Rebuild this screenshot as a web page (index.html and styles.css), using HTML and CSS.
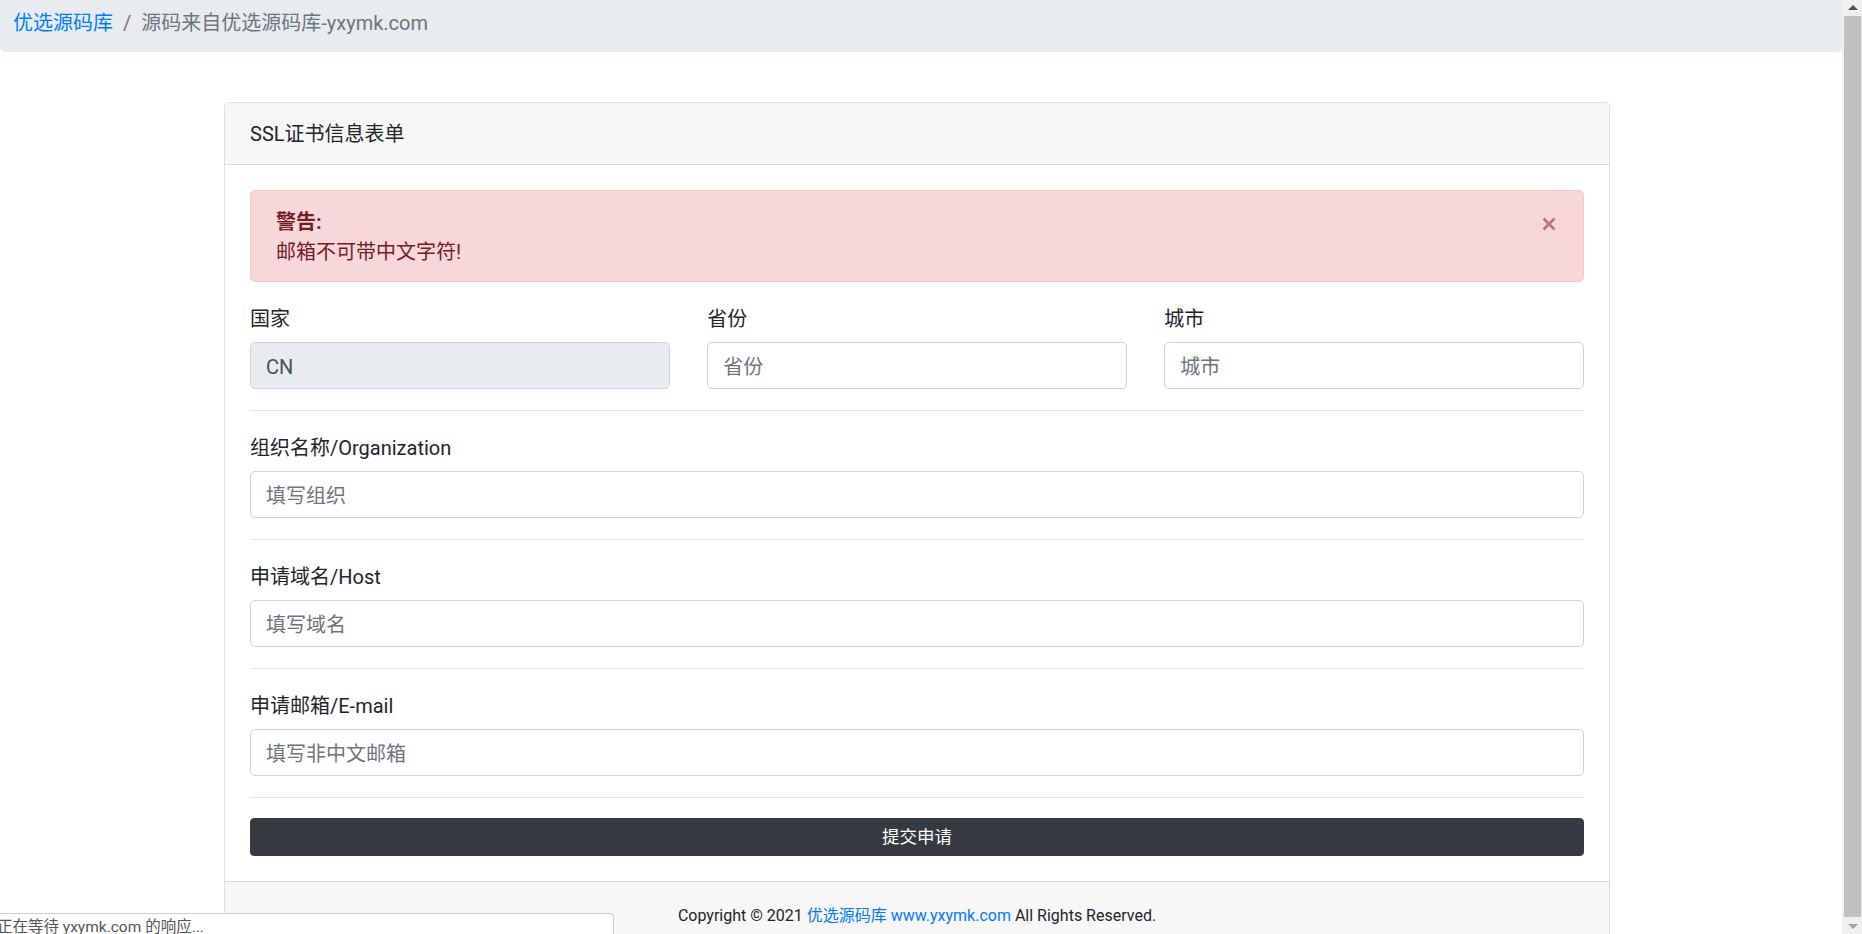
FILE: index.html
```html
<!DOCTYPE html>
<html lang="zh-CN">

<head>
    <meta charset="UTF-8" />
    <meta name="viewport" content="width=device-width, initial-scale=1.0" />
    <title>SSL证书信息表单</title>
    <link rel="stylesheet" href="styles.css">
</head>

<body>
    <div class="page">
        <nav>
            <ol class="breadcrumb">
                <li class="breadcrumb-item"><a href="#">优选源码库</a></li>
                <li class="breadcrumb-item active">源码来自优选源码库-yxymk.com</li>
            </ol>
        </nav>

        <div class="container">
            <div class="card">
                <div class="card-header">SSL证书信息表单</div>

                <div class="card-body">
                    <div class="alert">
                        <div>
                            <strong>警告:</strong><br>
                            邮箱不可带中文字符!
                        </div>
                        <button type="button" class="close" aria-label="Close">
                            <svg width="14" height="14" viewBox="0 0 14 14">
                                <path d="M1.5 1.5 L12.5 12.5 M12.5 1.5 L1.5 12.5" />
                            </svg>
                        </button>
                    </div>

                    <form>
                        <div class="form-row">
                            <div class="form-group">
                                <label>国家</label>
                                <input type="text" class="form-control" value="CN" readonly>
                            </div>
                            <div class="form-group">
                                <label>省份</label>
                                <input type="text" class="form-control" placeholder="省份">
                            </div>
                            <div class="form-group">
                                <label>城市</label>
                                <input type="text" class="form-control" placeholder="城市">
                            </div>
                        </div>
                        <hr>
                        <div class="form-group">
                            <label>组织名称/Organization</label>
                            <input type="text" class="form-control" placeholder="填写组织">
                        </div>
                        <hr>
                        <div class="form-group">
                            <label>申请域名/Host</label>
                            <input type="text" class="form-control" placeholder="填写域名">
                        </div>
                        <hr>
                        <div class="form-group">
                            <label>申请邮箱/E-mail</label>
                            <input type="text" class="form-control" placeholder="填写非中文邮箱">
                        </div>
                        <hr>
                        <button type="submit" class="btn">提交申请</button>
                    </form>
                </div>

                <div class="card-footer">
                    <small>Copyright © 2021 <a href="#">优选源码库 www.yxymk.com</a> All Rights Reserved.</small>
                </div>
            </div>
        </div>
    </div>

    <div class="scrollbar">
        <div class="scroll-btn"><span class="arrow-up"></span></div>
        <div class="thumb"></div>
        <div class="scroll-btn"><span class="arrow-down"></span></div>
    </div>

    <div class="status">正在等待 yxymk.com 的响应...</div>
</body>

</html>
```

FILE: styles.css
```css
* {
    box-sizing: border-box;
}

body {
    margin: 0;
    height: 100vh;
    display: flex;
    overflow: hidden;
    font-family: Roboto, "Noto Sans CJK SC", sans-serif;
    font-size: 20px;
    line-height: 1.5;
    color: #212529;
    background: #fff;
}

a {
    color: #007bff;
    text-decoration: none;
}

.page {
    flex: 1;
    min-width: 0;
    overflow: hidden;
}

/* breadcrumb (page is scrolled down a few px, so top padding is short) */
.breadcrumb {
    display: flex;
    list-style: none;
    margin: 0;
    padding: 8px 13px 14px;
    background: #e9ecef;
    border-radius: 0 0 5px 5px;
}

.breadcrumb-item+.breadcrumb-item {
    padding-left: 10px;
}

.breadcrumb-item+.breadcrumb-item::before {
    content: "/";
    padding-right: 10px;
    color: #6c757d;
}

.breadcrumb-item.active {
    color: #6c757d;
}

.container {
    width: 1386px;
    margin: 50px 0 0 224px;
}

.card {
    border: 1px solid rgba(0, 0, 0, 0.125);
    border-radius: 5px;
    background: #fff;
}

.card-header {
    padding: 16px 25px 15px;
    background: #f7f7f7;
    border-bottom: 1px solid rgba(0, 0, 0, 0.125);
    border-radius: 4px 4px 0 0;
}

.card-body {
    padding: 25px;
}

.card-footer {
    padding: 17px 25px 15px;
    background: #f7f7f7;
    border-top: 1px solid rgba(0, 0, 0, 0.125);
    text-align: center;
}

.card-footer small {
    font-size: 16px;
}

/* alert */
.alert {
    display: flex;
    justify-content: space-between;
    align-items: flex-start;
    padding: 16px 25px 14px;
    margin-bottom: 20px;
    color: #721c24;
    background: #f8d7da;
    border: 1px solid #f5c6cb;
    border-radius: 5px;
}

.alert strong {
    font-weight: 700;
}

.close {
    margin: 10px 2px 0 0;
    padding: 0;
    border: none;
    background: none;
    line-height: 0;
    cursor: pointer;
}

.close svg path {
    stroke: #b5797f;
    stroke-width: 2.8;
    fill: none;
}

/* form */
.form-row {
    display: grid;
    grid-template-columns: repeat(3, 1fr);
    column-gap: 37.5px;
    margin-bottom: 21px;
}

.form-group {
    margin-bottom: 21px;
}

.form-row .form-group {
    margin-bottom: 0;
}

label {
    display: block;
    padding-top: 2px;
    margin-bottom: 8px;
}

.form-control {
    display: block;
    width: 100%;
    height: 47px;
    padding: 9px 15px 6px;
    font-family: inherit;
    font-size: 20px;
    line-height: 1.5;
    color: #495057;
    background: #fff;
    border: 1px solid #ced4da;
    border-radius: 5px;
}

.form-control::placeholder {
    color: #6c757d;
}

.form-control[readonly] {
    background: #e9ecef;
}

hr {
    margin: 21px 0 20px;
    border: 0;
    border-top: 1px solid rgba(0, 0, 0, 0.1);
}

.btn {
    display: block;
    width: 100%;
    padding: 5px 10px;
    font-family: inherit;
    font-size: 17.5px;
    line-height: 1.5;
    color: #fff;
    background: #343a40;
    border: 1px solid #343a40;
    border-radius: 4px;
    cursor: pointer;
}

/* window chrome: scrollbar and status bubble */
.scrollbar {
    width: 20px;
    flex: none;
    display: flex;
    flex-direction: column;
    background: #f0f0f0;
}

.scroll-btn {
    height: 15px;
    display: flex;
    align-items: center;
    justify-content: center;
    padding-left: 1px;
}

.arrow-up {
    border-left: 5px solid transparent;
    border-right: 5px solid transparent;
    border-bottom: 5px solid #505050;
}

.arrow-down {
    border-left: 5px solid transparent;
    border-right: 5px solid transparent;
    border-top: 5px solid #a3a3a3;
}

.thumb {
    flex: 1;
    margin: 1px 1px 2px 2px;
    background: #c1c1c1;
}

.status {
    position: fixed;
    left: 0;
    bottom: 0;
    width: 614px;
    height: 21px;
    padding: 6px 0 0;
    text-indent: -3px;
    overflow: hidden;
    white-space: nowrap;
    font-size: 15.5px;
    line-height: 1;
    color: #555;
    background: #fff;
    border-top: 1px solid #cfcfcf;
    border-right: 1px solid #cfcfcf;
    border-top-right-radius: 4px;
}
```
